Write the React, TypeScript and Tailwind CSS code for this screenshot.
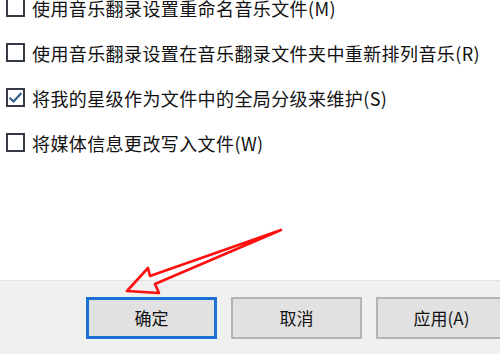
import React from "react";

const rows = [
  { label: "使用音乐翻录设置重命名音乐文件(M)", checked: false },
  { label: "使用音乐翻录设置在音乐翻录文件夹中重新排列音乐(R)", checked: false },
  { label: "将我的星级作为文件中的全局分级来维护(S)", checked: true },
  { label: "将媒体信息更改写入文件(W)", checked: false },
];

function Box({ checked }: { checked: boolean }) {
  return (
    <div className="w-[19px] h-[19px] border-2 border-[#333a44] bg-white flex items-center justify-center shrink-0">
      {checked && (
        <svg width="15" height="15" viewBox="0 0 14 14">
          <path d="M1.5 7.2 L5.2 10.8 L12.5 2.8" fill="none" stroke="#2f5b88" strokeWidth="2" />
        </svg>
      )}
    </div>
  );
}

export default function App() {
  return (
    <div
      className="relative w-[500px] h-[354px] overflow-hidden flex flex-col bg-white"
      style={{ fontFamily: '"Noto Sans CJK SC", "Microsoft YaHei", sans-serif' }}
    >
      <div className="h-[280px] bg-white flex flex-col">
        <div className="mt-[-15px] flex flex-col">
          {rows.map((r) => (
            <div key={r.label} className="h-[45px] flex items-center pl-[6px] gap-[7px]">
              <Box checked={r.checked} />
              <span className="text-[18px] leading-none tracking-[0.4px] text-[#111] whitespace-nowrap">{r.label}</span>
            </div>
          ))}
        </div>
      </div>
      <div className="flex-1 bg-[#f0f0f0] border-t border-[#e2e2e2] pt-[16px] pl-[86px] flex gap-[14px]">
        <button className="w-[131px] h-[42px] shrink-0 bg-[#e1e1e1] border-[3px] border-[#1a72d4] text-[17px] text-[#111] flex items-center justify-center">
          确定
        </button>
        <button className="w-[131px] h-[42px] shrink-0 bg-[#e1e1e1] border-2 border-[#b4b4b4] text-[17px] text-[#111] flex items-center justify-center">
          取消
        </button>
        <button className="w-[131px] h-[42px] shrink-0 bg-[#e1e1e1] border-2 border-[#b4b4b4] text-[17px] text-[#111] flex items-center justify-center">
          应用(A)
        </button>
      </div>
      <svg className="absolute left-0 top-0 pointer-events-none" width="500" height="354" viewBox="0 0 500 354">
        <path
          d="M127 291 L148 268 L150 276 L281 230 L155 284 L159 293 Z"
          fill="none"
          stroke="#ff1010"
          strokeWidth="2.6"
          strokeLinejoin="round"
        />
      </svg>
    </div>
  );
}
